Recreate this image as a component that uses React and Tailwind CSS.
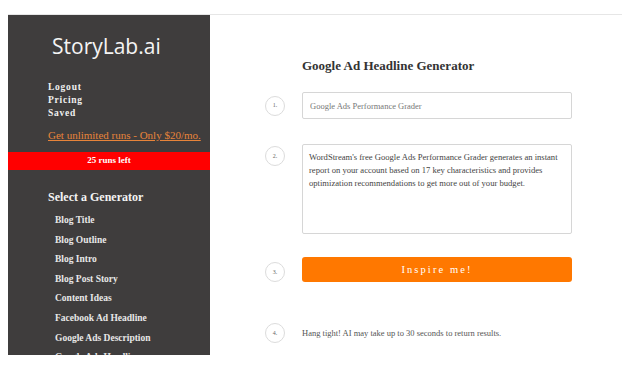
const generators = [
  "Blog Title",
  "Blog Outline",
  "Blog Intro",
  "Blog Post Story",
  "Content Ideas",
  "Facebook Ad Headline",
  "Google Ads Description",
  "Google Ads Headline",
];

function Step({ n }) {
  return (
    <div className="w-[20px] h-[20px] rounded-full border border-[#dcdcdc] flex items-center justify-center text-[6px] text-[#666]">
      {n}.
    </div>
  );
}

export default function App() {
  const serif = { fontFamily: '"Liberation Serif", "DejaVu Serif", serif' };

  return (
    <div className="w-[640px] h-[375px] bg-white pt-[14px] pl-[8px]" style={serif}>
      <div className="flex w-[614px] h-[341px] border-t border-[#e6e6e6] overflow-hidden">
        {/* sidebar */}
        <aside className="w-[202px] shrink-0 bg-[#3f3d3d] text-white">
          <div
            className="pl-[44px] pt-[18px] text-[21px] leading-[26px] text-[#f4f4f4]"
            style={{ fontFamily: '"Open Sans", Lato, sans-serif' }}
          >
            StoryLab.ai
          </div>
          <div className="pl-[40px] pt-[22px] text-[9.5px] leading-[13px] font-bold tracking-[0.08em] text-[#f0f0f0]">
            <div>Logout</div>
            <div>Pricing</div>
            <div>Saved</div>
          </div>
          <div className="pl-[40px] pt-[7px] text-[11px] leading-[16px] text-[#e8843a] underline">
            Get unlimited runs - Only $20/mo.
          </div>
          <div className="mt-[9px] h-[18px] bg-[#ff0000] flex items-center justify-center text-[9px] font-bold text-white">
            25 runs left
          </div>
          <div className="pl-[40px] pt-[19px] text-[12px] leading-[16px] font-bold text-[#f4f4f4]">
            Select a Generator
          </div>
          <ul className="pl-[47px] pt-[6px] text-[9.5px] leading-[19.6px] font-bold text-[#e8e8e8]">
            {generators.map((g) => (
              <li key={g}>{g}</li>
            ))}
          </ul>
        </aside>

        {/* main */}
        <main className="flex-1 bg-white pl-[55px]">
          <h1 className="pl-[37px] pt-[42px] text-[13px] leading-[18px] font-bold text-[#333]">
            Google Ad Headline Generator
          </h1>
          <div className="grid grid-cols-[20px_270px] gap-x-[17px] mt-[17px]">
            <div className="flex items-center">
              <Step n={1} />
            </div>
            <input
              className="h-[27px] border border-[#d6d6d6] rounded-[2px] px-[7px] text-[8.5px] text-[#555] placeholder:text-[#777] outline-none"
              placeholder="Google Ads Performance Grader"
            />

            <div className="pt-[2px] mt-[25px]">
              <Step n={2} />
            </div>
            <textarea
              readOnly
              className="mt-[25px] h-[90px] border border-[#d6d6d6] rounded-[2px] px-[6px] py-[6px] text-[8.6px] leading-[13px] text-[#444] resize-none outline-none"
              defaultValue="WordStream's free Google Ads Performance Grader generates an instant report on your account based on 17 key characteristics and provides optimization recommendations to get more out of your budget."
            />

            <div className="mt-[23px] flex items-center pt-[5px]">
              <Step n={3} />
            </div>
            <button className="mt-[23px] h-[25px] rounded-[3px] bg-[#ff7800] text-white text-[10.5px] tracking-[0.2em]">
              Inspire me!
            </button>

            <div className="mt-[41px]">
              <Step n={4} />
            </div>
            <div className="mt-[41px] h-[20px] flex items-center text-[8.5px] text-[#555]">
              Hang tight! AI may take up to 30 seconds to return results.
            </div>
          </div>
        </main>
      </div>
    </div>
  );
}
